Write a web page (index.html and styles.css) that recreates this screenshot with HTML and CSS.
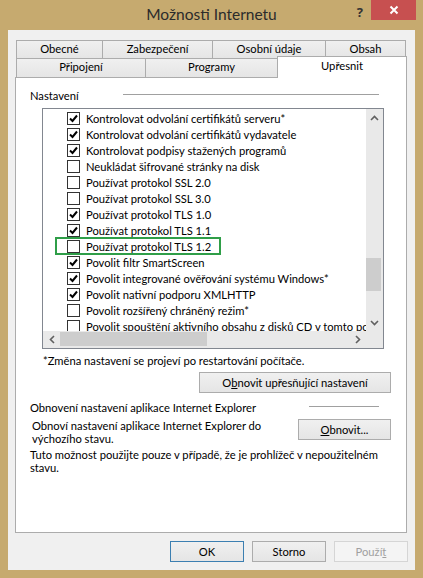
FILE: index.html
```html
<html>
<head>
  <meta charset="utf-8">
  <title>Možnosti Internetu</title>
  <link rel="stylesheet" href="styles.css">
</head>
<body>
  <div class="window">
    <div class="titlebar">
      <div></div>
      <div class="title">Možnosti Internetu</div>
      <div class="controls">
        <span class="help">?</span>
        <span class="close">
          <svg width="10" height="10" viewBox="0 0 10 10"><path d="M1.5 1.5 L8.5 8.5 M8.5 1.5 L1.5 8.5" stroke="#fff" stroke-width="2"/></svg>
        </span>
      </div>
    </div>

    <div class="client">
      <div class="tabs tabs-back">
        <div class="tab" style="width:87px">Obecné</div>
        <div class="tab" style="width:111px">Zabezpečení</div>
        <div class="tab" style="width:114px">Osobní údaje</div>
        <div class="tab" style="width:81px">Obsah</div>
      </div>
      <div class="tabs tabs-front">
        <div class="tab" style="width:130px">Připojení</div>
        <div class="tab" style="width:133px">Programy</div>
        <div class="tab active" style="width:130px">Upřesnit</div>
      </div>

      <div class="panel">
        <div class="group-head">
          <span class="group-label">Nastavení</span>
          <span class="group-line" style="width:256px"></span>
        </div>

        <div class="listbox">
          <div class="items">
            <div class="row"><span class="box on"></span>Kontrolovat odvolání certifikátů serveru*</div>
            <div class="row"><span class="box on"></span>Kontrolovat odvolání certifikátů vydavatele</div>
            <div class="row"><span class="box on"></span>Kontrolovat podpisy stažených programů</div>
            <div class="row"><span class="box"></span>Neukládat šifrované stránky na disk</div>
            <div class="row"><span class="box"></span>Používat protokol SSL 2.0</div>
            <div class="row"><span class="box"></span>Používat protokol SSL 3.0</div>
            <div class="row"><span class="box on"></span>Používat protokol TLS 1.0</div>
            <div class="row"><span class="box on"></span>Používat protokol TLS 1.1</div>
            <div class="row marked"><span class="box"></span>Používat protokol TLS 1.2</div>
            <div class="row"><span class="box on"></span>Povolit filtr SmartScreen</div>
            <div class="row"><span class="box on"></span>Povolit integrované ověřování systému Windows*</div>
            <div class="row"><span class="box on"></span>Povolit nativní podporu XMLHTTP</div>
            <div class="row"><span class="box"></span>Povolit rozšířený chráněný režim*</div>
            <div class="row"><span class="box"></span>Povolit spouštění aktivního obsahu z disků CD v tomto poč</div>
          </div>
          <div class="vscroll">
            <span class="arrow"><svg width="9" height="6" viewBox="0 0 9 6"><path d="M1 5 L4.5 1.5 L8 5" fill="none" stroke="#606060" stroke-width="1.6"/></svg></span>
            <span class="vtrack"><span class="vthumb"></span></span>
            <span class="arrow"><svg width="9" height="6" viewBox="0 0 9 6"><path d="M1 1 L4.5 4.5 L8 1" fill="none" stroke="#606060" stroke-width="1.6"/></svg></span>
          </div>
          <div class="hscroll">
            <span class="arrow"><svg width="6" height="9" viewBox="0 0 6 9"><path d="M5 1 L1.5 4.5 L5 8" fill="none" stroke="#606060" stroke-width="1.6"/></svg></span>
            <span class="htrack"><span class="hthumb"></span></span>
            <span class="arrow"><svg width="6" height="9" viewBox="0 0 6 9"><path d="M1 1 L4.5 4.5 L1 8" fill="none" stroke="#606060" stroke-width="1.6"/></svg></span>
          </div>
          <div class="corner"></div>
        </div>

        <div class="note">*Změna nastavení se projeví po restartování počítače.</div>
        <div class="btn-row">
          <button class="btn wide">O<u>b</u>novit upřesňující nastavení</button>
        </div>

        <div class="group-head reset-head">
          <span class="group-label">Obnovení nastavení aplikace Internet Explorer</span>
          <span class="group-line" style="width:70px"></span>
        </div>
        <div class="reset-row">
          <p>Obnoví nastavení aplikace Internet Explorer do výchozího stavu.</p>
          <button class="btn"><u>O</u>bnovit...</button>
        </div>
        <p class="hint">Tuto možnost použijte pouze v případě, že je prohlížeč v nepoužitelném stavu.</p>
      </div>

      <div class="dialog-buttons">
        <button class="btn default">OK</button>
        <button class="btn">Storno</button>
        <button class="btn disabled">Použí<u>t</u></button>
      </div>
    </div>
  </div>
</body>
</html>
```

FILE: styles.css
```css
body {
  margin: 0;
  background: #c6aa6f;
  font-family: Lato, "Noto Sans", sans-serif;
  font-size: 11.2px;
  color: #000;
}

.window {
  width: 423px;
  height: 578px;
  box-sizing: border-box;
  padding: 0 8px 8px;
  background: #c6aa6f;
  display: flex;
  flex-direction: column;
}

/* title bar */
.titlebar {
  height: 30px;
  display: grid;
  grid-template-columns: 1fr auto 1fr;
  margin: 0 -8px;
}

.title {
  font-size: 15.5px;
  color: #2b2b2b;
  padding-top: 5px;
}

.controls {
  display: flex;
  justify-content: flex-end;
  align-items: flex-start;
  padding-right: 7px;
}

.help {
  font-family: "Noto Sans", sans-serif;
  font-size: 13px;
  font-weight: bold;
  color: #333;
  margin-right: 8px;
  margin-top: 3px;
}

.close {
  width: 45px;
  height: 20px;
  background: #c75050;
  display: flex;
  align-items: center;
  justify-content: center;
}

/* client area */
.client {
  flex: 1;
  background: #f0f0f0;
  padding: 10px 9px 0 7px;
}

.tabs {
  display: flex;
  margin-left: 1px;
}

.tab {
  box-sizing: border-box;
  height: 19px;
  margin-right: -1px;
  border: 1px solid #acacac;
  background: linear-gradient(#f0f0f0, #e5e5e5);
  text-align: center;
  line-height: 16px;
  color: #000;
}

.tabs-front {
  height: 19px;
  margin-top: -1px;
  align-items: flex-end;
}

.tabs-front .tab {
  border-bottom: none;
}

.tabs-front .tab.active {
  height: 22px;
  margin-bottom: -1px;
  background: #fff;
  position: relative;
  z-index: 1;
  line-height: 17px;
}

.panel {
  box-sizing: border-box;
  height: 456px;
  width: 392px;
  border: 1px solid #acacac;
  background: #fff;
  padding: 9px 0 0 14px;
}

.group-head {
  display: flex;
  align-items: center;
  height: 16px;
}

.group-label {
  width: 93px;
}

.group-line {
  height: 1px;
  background: #a0a0a0;
  margin-top: -2px;
}

/* settings list */
.listbox {
  box-sizing: border-box;
  width: 342px;
  height: 241px;
  margin: 5px 0 0 12px;
  border: 1px solid #828790;
  display: grid;
  grid-template-columns: 1fr 17px;
  grid-template-rows: 1fr 17px;
}

.items {
  overflow: hidden;
  padding-top: 1px;
}

.row {
  position: relative;
  height: 16px;
  display: flex;
  align-items: center;
  padding-left: 24px;
  white-space: nowrap;
}

.box {
  flex: none;
  box-sizing: border-box;
  width: 13px;
  height: 13px;
  border: 1px solid #333;
  background: #fff;
  margin-right: 6px;
}

.box.on {
  background: #fff url("data:image/svg+xml;utf8,<svg xmlns='http://www.w3.org/2000/svg' width='11' height='11'><path d='M2 5.5 L4.5 8 L9 2.5' fill='none' stroke='black' stroke-width='2'/></svg>") no-repeat center;
}

.row.marked::after {
  content: "";
  position: absolute;
  left: 12px;
  top: -1px;
  width: 166px;
  height: 18px;
  box-sizing: border-box;
  border: 2px solid #2f9e48;
}

.vscroll,
.hscroll,
.corner {
  background: #e9e9e9;
}

.vscroll {
  display: flex;
  flex-direction: column;
}

.vscroll .arrow {
  height: 17px;
  display: flex;
  align-items: center;
  justify-content: center;
}

.vtrack {
  flex: 1;
  padding-top: 132px;
}

.vthumb {
  display: block;
  width: 15px;
  height: 33px;
  background: #cdcdcd;
}

.hscroll {
  display: flex;
}

.hscroll .arrow {
  width: 17px;
  display: flex;
  align-items: center;
  justify-content: center;
}

.htrack {
  flex: 1;
  padding-top: 1px;
}

.hthumb {
  display: block;
  width: 147px;
  height: 14px;
  background: #cdcdcd;
}

.note {
  margin: 4px 0 0 13px;
  line-height: 16px;
}

.btn-row {
  display: flex;
  justify-content: flex-end;
  padding-right: 15px;
  margin-top: 3px;
}

/* buttons */
.btn {
  box-sizing: border-box;
  height: 21px;
  padding: 0;
  border: 1px solid #acacac;
  background: linear-gradient(#f0f0f0, #e5e5e5);
  font-family: inherit;
  font-size: 11.2px;
  color: #000;
}

.btn.wide {
  width: 192px;
}

.reset-head {
  margin-top: 6px;
}

.reset-head .group-label {
  width: 279px;
  white-space: nowrap;
}

.reset-row {
  display: flex;
  align-items: flex-start;
  justify-content: space-between;
  padding-right: 15px;
  margin-top: 4px;
}

.reset-row p {
  margin: 0 0 0 2px;
  width: 240px;
  line-height: 13px;
}

.reset-row .btn {
  width: 93px;
}

.hint {
  margin: 3px 0 0;
  width: 365px;
  line-height: 13px;
}

.dialog-buttons {
  display: flex;
  justify-content: flex-end;
  gap: 8px;
  margin: 8px -2px 0 0;
}

.dialog-buttons .btn {
  width: 74px;
}

.btn.default {
  border-color: #3c7fb1;
}

.btn.disabled {
  color: #a0a0a0;
  border-color: #d5d5d5;
  background: #f4f4f4;
}
```
